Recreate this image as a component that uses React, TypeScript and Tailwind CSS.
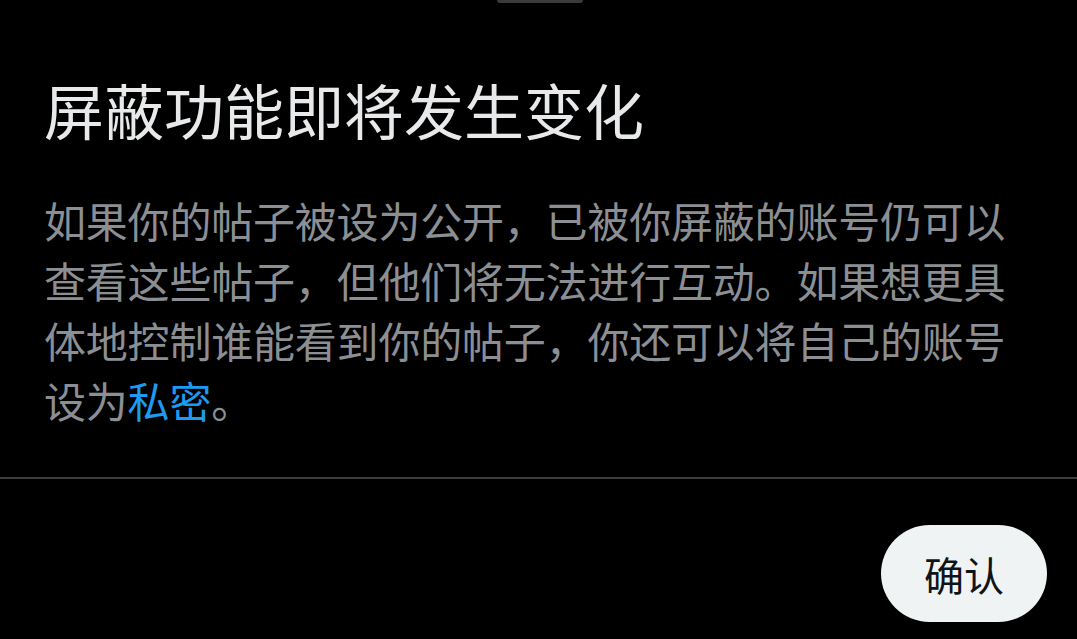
import React from "react";

export default function App() {
  return (
    <div
      className="w-[1077px] h-[639px] bg-black overflow-hidden flex flex-col"
      style={{ fontFamily: '"Noto Sans CJK SC", "Noto Sans", sans-serif' }}
    >
      <div className="flex justify-center">
        <div className="w-[86px] h-[3px] rounded-b-full bg-[#3a3b3d] ml-[3px]" />
      </div>
      <div className="px-[44px] pt-[70px]">
        <h1 className="text-[60px] leading-[72px] font-normal text-[#e7e9ea] m-0">
          屏蔽功能即将发生变化
        </h1>
        <p className="mt-[45px] text-[42px] leading-[60px] text-[#8b8f93] tracking-[-0.2px] w-[990px]">
          如果你的帖子被设为公开，已被你屏蔽的账号仍可以查看这些帖子，但他们将无法进行互动。如果想更具体地控制谁能看到你的帖子，你还可以将自己的账号设为
          <span className="text-[#1d9bf0]">私密</span>。
        </p>
      </div>
      <div className="mt-[47px] h-[2px] bg-[#3a3d40]" />
      <div className="flex justify-end pr-[30px] pt-[46px]">
        <button className="w-[166px] h-[97px] rounded-full bg-[#eff3f4] text-[40px] font-normal text-[#0f1419] flex items-center justify-center">
          确认
        </button>
      </div>
    </div>
  );
}
